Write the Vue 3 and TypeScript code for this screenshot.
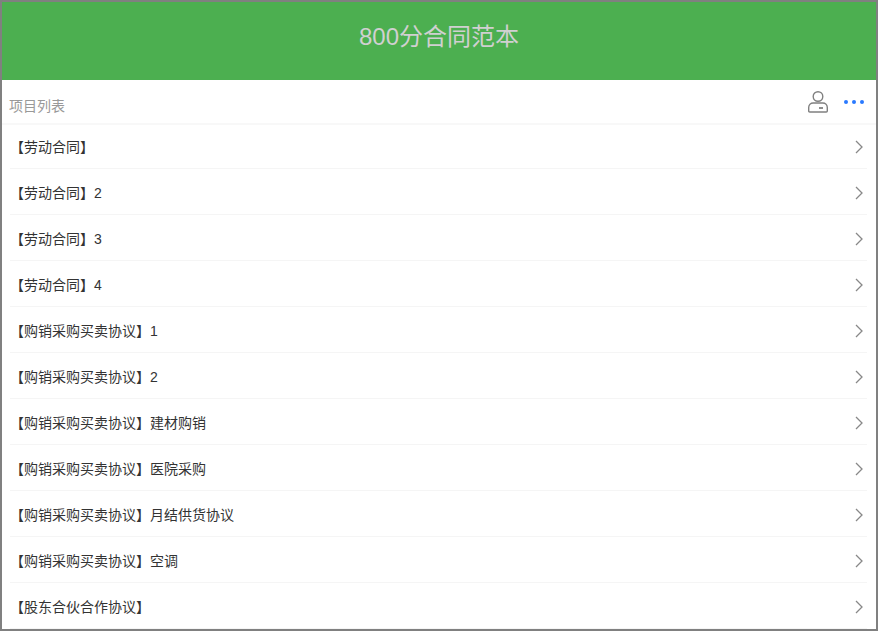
<script setup lang="ts">
const items: string[] = [
  '【劳动合同】',
  '【劳动合同】2',
  '【劳动合同】3',
  '【劳动合同】4',
  '【购销采购买卖协议】1',
  '【购销采购买卖协议】2',
  '【购销采购买卖协议】建材购销',
  '【购销采购买卖协议】医院采购',
  '【购销采购买卖协议】月结供货协议',
  '【购销采购买卖协议】空调',
  '【股东合伙合作协议】',
]
</script>

<template>
  <div class="page">
    <header class="banner">800分合同范本</header>
    <div class="toolbar">
      <span class="caption">项目列表</span>
      <div class="actions">
        <svg class="user" width="22" height="24" viewBox="0 0 22 24" fill="none" stroke="#808080" stroke-width="1.4">
          <circle cx="11" cy="6.500" r="4.800" />
          <path d="M1.700 21v-3.500c0-2.600 2-4.500 4.500-4.500h9.600c2.500 0 4.500 1.900 4.500 4.500v3.500c0 .6-.4 1-1 1H2.700c-.6 0-1-.4-1-1z" />
          <path d="M12 18h4" stroke-width="1.800" />
        </svg>
        <div class="dots"><i></i><i></i><i></i></div>
      </div>
    </div>
    <ul class="list">
      <li v-for="item in items" :key="item" class="row">
        <span class="label">{{ item }}</span>
        <svg width="8" height="14" viewBox="0 0 8 14" fill="none" stroke="#888" stroke-width="1.300">
          <path d="M1 1l6 6-6 6" />
        </svg>
      </li>
    </ul>
  </div>
</template>

<style>
html, body { margin: 0; padding: 0; background: #fff; }
</style>

<style scoped>
.page {
  box-sizing: border-box;
  width: 878px;
  height: 631px;
  border: 2px solid #808080;
  overflow: hidden;
  font-family: "Liberation Sans", "Noto Sans CJK SC", sans-serif;
  background: #fff;
}
.banner {
  height: 78px;
  background: #4caf50;
  color: #d0d0d0;
  font-size: 24px;
  line-height: 69px;
  text-align: center;
}
.toolbar {
  height: 45px;
  box-sizing: border-box;
  border-bottom: 2px solid #f8f8f8;
  padding: 0 12px 0 7px;
  display: flex;
  align-items: center;
  justify-content: space-between;
}
.caption {
  font-size: 14px;
  color: #999;
  position: relative;
  top: 3px;
}
.actions {
  display: flex;
  align-items: center;
  gap: 15px;
}
.user { margin-top: 1px; }
.dots {
  display: flex;
  gap: 4px;
}
.dots i {
  width: 4px;
  height: 4px;
  border-radius: 50%;
  background: #2979ff;
}
.list {
  list-style: none;
  margin: 0;
  padding: 0 9px 0 8px;
}
.row {
  height: 46px;
  box-sizing: border-box;
  border-bottom: 1px solid #f5f5f5;
  display: flex;
  align-items: center;
  justify-content: space-between;
  font-size: 14px;
  color: #333;
  padding: 3px 4px 0 0;
}
.label { margin-bottom: 2px; }
.row:first-child {
  height: 44px;
  padding-top: 1px;
}
</style>
